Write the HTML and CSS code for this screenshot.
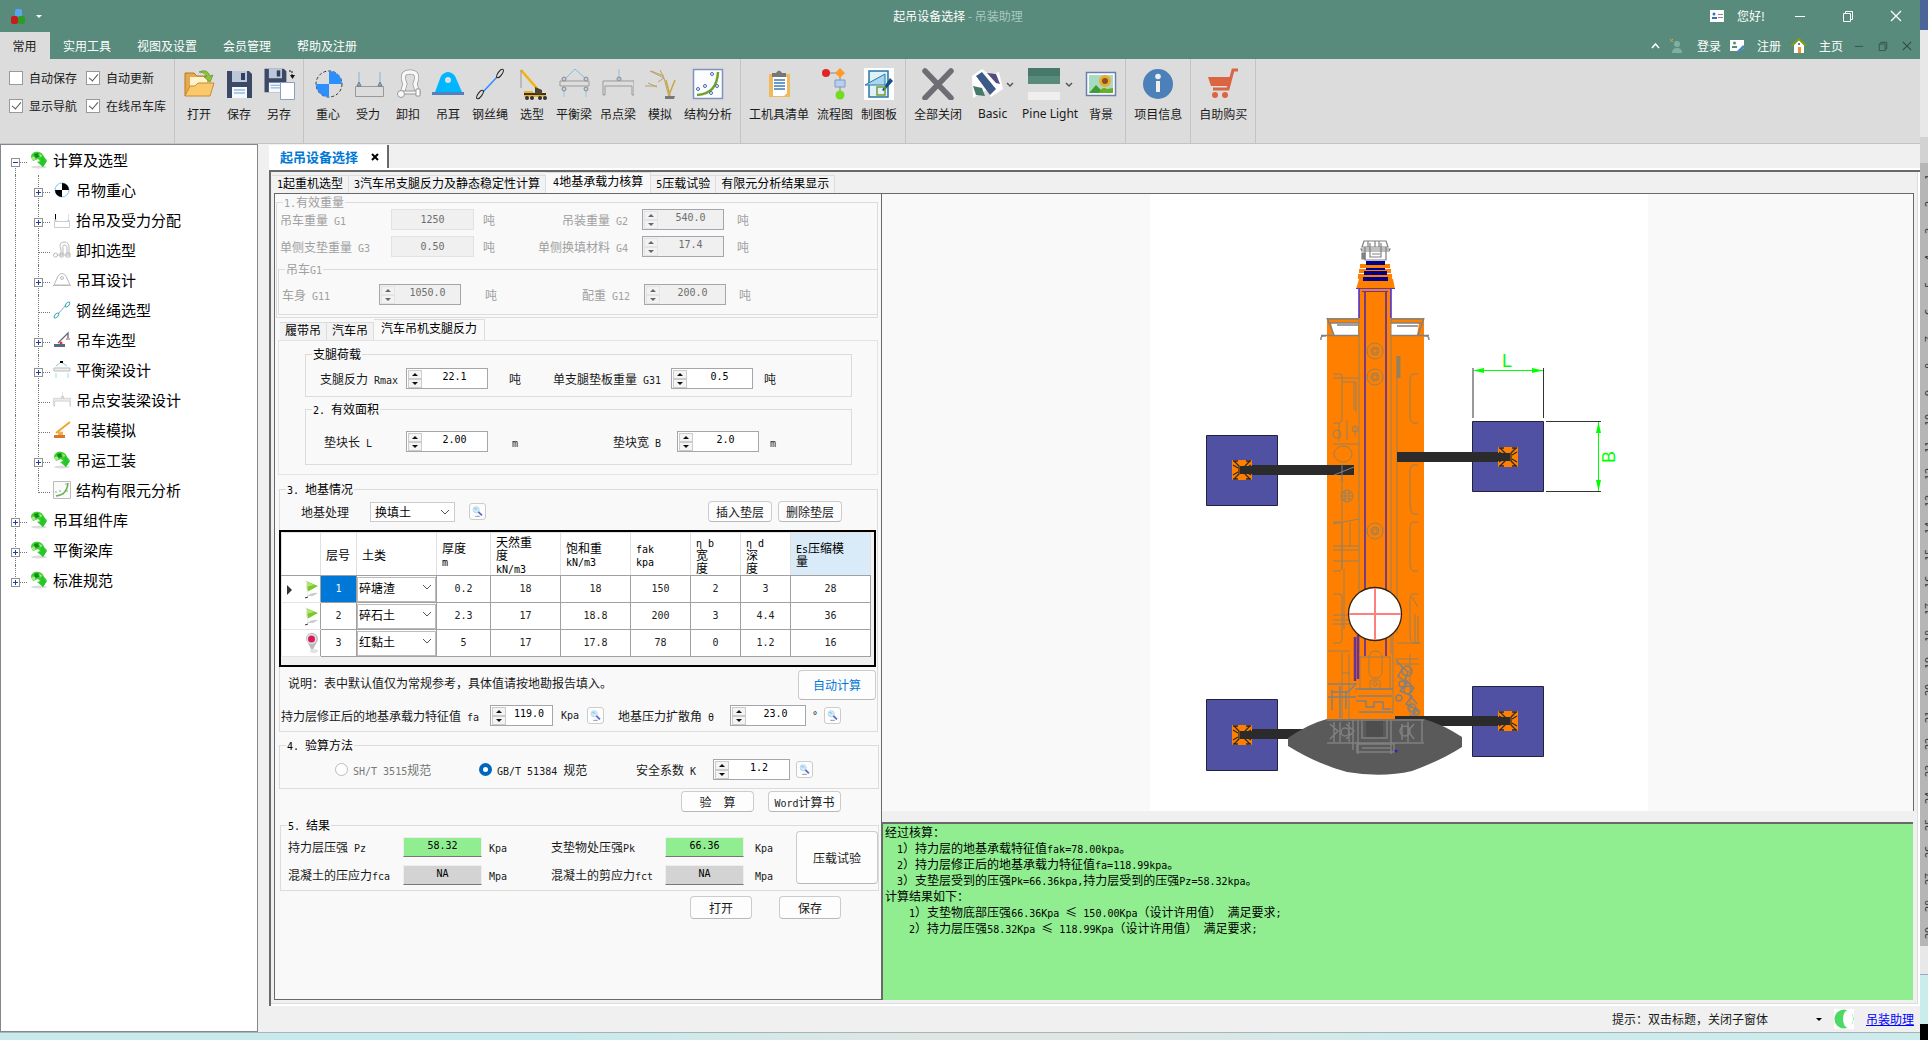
FILE: index.html
```html
<!DOCTYPE html>
<html lang="zh-CN">
<head>
<meta charset="utf-8">
<title>起吊设备选择 - 吊装助理</title>
<link rel="stylesheet" href="styles.css">
</head>
<body>
<svg class="defs" aria-hidden="true">
  <symbol id="tree-leaf" viewBox="0 0 18 18"><ellipse cx="9" cy="16" rx="8" ry="1.500" fill="#ddd"/><path d="M1 6C1 2 5 0 9 1q4 1 5 5l3 3-4 7-6-5 3-1-2-2-5 2z" fill="#3fd02f"/><path d="M4 3l4-1 1 4-4 1z" fill="#0f8a1c"/><path d="M10 4l4 2 1 4h2l-4 6-4-5h2z" fill="#25c52c"/><circle cx="3.500" cy="7.500" r="2" fill="#a5e884"/><path d="M9 3l3 1-1 3z" fill="#a9ec7b"/></symbol>
  <symbol id="find" viewBox="0 0 17 17"><circle cx="7" cy="6.500" r="3.500" fill="#cfeafa" stroke="#b7d5ea"/><path d="M9.500 9l4 4" stroke="#5a69cf" stroke-width="2"/><path d="M6 14h5" stroke="#888"/><path d="M5 5l3 1" stroke="#6ab8ec"/></symbol>
  <symbol id="flag" viewBox="0 0 16 22"><path d="M3 3l12 5-11 6z" fill="#7cc82a"/><path d="M3 3l8 4-8 2z" fill="#b2e36c"/><path d="M3 2l2 17" stroke="#eee"/><path d="M4 18q5-4 11-3l-5 3z" fill="#ccc"/><path d="M2 20l3-1" stroke="#333"/></symbol>
  <symbol id="pin" viewBox="0 0 16 22"><path d="M3 8a6 6 0 1 1 11 2l-5 9-4-8z" fill="#bbb"/><circle cx="8.500" cy="7" r="5" fill="#e4e4e4"/><circle cx="8.500" cy="7" r="3.500" fill="#d81b60"/><ellipse cx="11" cy="19" rx="4" ry="2" fill="#e3e3e3"/></symbol>
  <symbol id="disk" viewBox="0 0 32 32"><path d="M4 3h22l3 3v24H4z" fill="#3c4966"/><path d="M9 3h15v11H9z" fill="#bcc7d8"/><path d="M18 5h4v7h-4z" fill="#33405c"/><path d="M9 19h15v11H9z" fill="#f5f8fc"/><path d="M11 22h11M11 25h11" stroke="#6a9bd0"/></symbol>
  <symbol id="chart" viewBox="0 0 32 32"><path d="M1.500 1.500h29v29h-29z" fill="#fcfdff" stroke="#8292be" stroke-width="1.500"/><path d="M5 27Q25 26 26 4" fill="none" stroke="#6ea32d" stroke-width="2.500"/><g fill="#fff" stroke="#4265ad"><circle cx="6" cy="21" r="1.500"/><circle cx="13" cy="18" r="1.500"/><circle cx="20" cy="6" r="1.500"/><circle cx="25" cy="18" r="1.500"/><circle cx="19" cy="25" r="1.500"/></g></symbol>
  <symbol id="frame-load" viewBox="0 0 32 32"><path d="M3.500 18.500h28v10h-28z" fill="none" stroke="#999"/><path d="M7 4v10M28 4v10" stroke="#7db7e8"/><path d="M5 18l2-4 2 4zM26 18l2-4 2 4z" fill="#9ab6d0" stroke="#777"/></symbol>
  <symbol id="beam" viewBox="0 0 32 32"><path d="M7 11L17 1l11 10" fill="none" stroke="#78c0e0"/><path d="M2 13h29v5H2z" fill="#ddd" stroke="#999"/><path d="M6 23v6M28 23v6" stroke="#83cfe0"/><g fill="#ccd" stroke="#888"><circle cx="6" cy="11" r="2"/><circle cx="28" cy="11" r="2"/><circle cx="6" cy="21" r="2"/><circle cx="28" cy="21" r="2"/></g></symbol>
  <symbol id="point-beam" viewBox="0 0 32 32"><path d="M17 1v10" stroke="#8bc4de"/><circle cx="17" cy="11" r="2" fill="#b9c9d9" stroke="#888"/><path d="M1 27V13h31v14h-2V18H3v9z" fill="#ddd" stroke="#999"/></symbol>
  <symbol id="rope" viewBox="0 0 32 32"><path d="M9 24L23 9" stroke="currentColor" stroke-width="1.500"/><ellipse cx="6" cy="26.500" rx="2" ry="5" transform="rotate(35 6 26.500)" fill="none" stroke="#222"/><ellipse cx="26" cy="5.500" rx="2" ry="5" transform="rotate(35 26 5.500)" fill="none" stroke="#222"/></symbol>
  <symbol id="win-min" viewBox="0 0 12 12"><path d="M1 6.500h10" stroke="currentColor"/></symbol>
  <symbol id="win-restore" viewBox="0 0 12 12"><path d="M1.500 3.500h7v8h-7zM3.500 3V1.500h7v8H9" fill="none" stroke="currentColor"/></symbol>
  <symbol id="win-close" viewBox="0 0 12 12"><path d="M1 1l10 10M11 1L1 11" stroke="currentColor" stroke-width="1.300"/></symbol>
  <symbol id="down" viewBox="0 0 8 8"><path d="M1 2l3 3 3-3" fill="none" stroke="#555" stroke-width="1.500"/></symbol>
  <symbol id="foot" viewBox="0 0 20 20"><rect width="20" height="20" rx="1" fill="#ff8000"/><path d="M2 1l5 5v8l-5 5M18 1l-5 5v8l5 5M1 1h5M14 1h5M1 19h5M14 19h5M1 5l5 3M1 15l5-3M19 5l-5 3M19 15l-5-3" fill="none" stroke="#2b2b2b" stroke-width="1.300"/></symbol>
</svg>

<div class="desktop">
<div class="window">
  <header class="titlebar">
    <div class="quick">
      <svg width="17" height="17" viewBox="0 0 17 17"><rect x="5" y="1" width="7" height="8" rx="2" fill="#58a8ee"/><rect x="1" y="8" width="7" height="8" rx="2" fill="#c41d1d"/><rect x="8" y="8" width="7" height="8" rx="2" fill="#2d9c25"/></svg>
      <span class="caret white"></span>
    </div>
    <h1>起吊设备选择 <span>- 吊装助理</span></h1>
    <div class="win-controls">
      <svg class="card" width="14" height="12" viewBox="0 0 14 12"><path d="M0 0h14v12H0z" fill="#fff"/><circle cx="4" cy="4" r="1.500" fill="#3a6fb8"/><path d="M2 9V7h5v2z" fill="#3a6fb8"/><path d="M8 4h5v1H8zM8 7h5v1H8z" fill="#888"/></svg>
      <span class="hello">您好!</span>
      <button aria-label="最小化"><svg><use href="#win-min"/></svg></button>
      <button aria-label="还原"><svg><use href="#win-restore"/></svg></button>
      <button aria-label="关闭"><svg><use href="#win-close"/></svg></button>
    </div>
  </header>
  <nav class="menubar">
    <button class="menu active">常用</button><button class="menu">实用工具</button><button class="menu">视图及设置</button><button class="menu">会员管理</button><button class="menu">帮助及注册</button>
    <div class="account">
      <svg width="9" height="6" viewBox="0 0 9 6"><path d="M1 5l3.500-4L8 5" fill="none" stroke="#fff" stroke-width="1.500"/></svg>
      <svg class="ic-user" width="14" height="16" viewBox="0 0 14 16"><path d="M1 1l3 3M4 1L1 4" stroke="#d2a23c"/><circle cx="8" cy="6" r="3" fill="#7fb1a2"/><path d="M3 15q0-5 5-5t5 5z" fill="#7fb1a2"/></svg>
      <a href="#">登录</a>
      <svg class="ic-reg" width="16" height="14" viewBox="0 0 16 14"><path d="M0 1h14v8l-4 3H0z" fill="#fff"/><circle cx="4.500" cy="4" r="1.500" fill="#588b7b"/><path d="M2 9V7h5v2z" fill="#588b7b"/><path d="M8 13l6-6" stroke="#4a86c8" stroke-width="2.500"/></svg>
      <a href="#">注册</a>
      <svg class="ic-home" width="16" height="16" viewBox="0 0 16 16"><path d="M3 7l5-5 5 5v8H3z" fill="#fff"/><path d="M0 8l8-7 7 7" fill="none" stroke="#7da018" stroke-width="2"/><path d="M7 9h3v6H7z" fill="#f0902c"/><path d="M7 5h2v2H7z" fill="#4a7dd0"/></svg>
      <a href="#">主页</a>
      <button aria-label="子窗口最小化"><svg><use href="#win-min"/></svg></button>
      <button aria-label="子窗口还原"><svg><use href="#win-restore"/></svg></button>
      <button aria-label="子窗口关闭"><svg><use href="#win-close"/></svg></button>
    </div>
  </nav>

  <div class="ribbon">
    <div class="group checks">
      <label><input type="checkbox">自动保存</label><label><input type="checkbox" checked>自动更新</label>
      <label><input type="checkbox" checked>显示导航</label><label><input type="checkbox" checked>在线吊车库</label>
    </div>
    <div class="group">
      <button class="tool"><svg viewBox="0 0 32 32"><path d="M2 28V5h9l3 3h13v5" fill="#e6a94d" stroke="#b97a24"/><path d="M7 9h17v9H7z" fill="#fff3cf"/><path d="M2 28l5-10h5l3-3h16l-4 13z" fill="#fac96c" stroke="#c98b30"/><path d="M16 4q8-4 11 4l3-1-3 7-6-5 3-1q-3-4-8-4z" fill="#8fc33c" stroke="#5f8f25" stroke-width=".7"/></svg>打开</button>
      <button class="tool"><svg><use href="#disk"/></svg>保存</button>
      <button class="tool"><svg viewBox="0 0 32 32"><svg x="-2" y="-2" width="28" height="28" viewBox="0 0 32 32"><use href="#disk" width="32" height="32"/></svg><path d="M17.500 14.500h14v17h-14z" fill="#fff" stroke="#88a0c4"/><path d="M26 3h3v6" fill="none" stroke="#111" stroke-dasharray="2 1"/><path d="M27 7h5l-2.500 4z" fill="#111"/></svg>另存</button>
    </div>
    <div class="group">
      <button class="tool"><svg viewBox="0 0 32 32"><circle cx="17" cy="16" r="13" fill="#dcdcdc" stroke="#333" stroke-dasharray="3 2"/><path d="M17 3a13 13 0 0 1 13 13H17zM17 29A13 13 0 0 1 4 16h13z" fill="#2d8fff"/></svg>重心</button>
      <button class="tool"><svg><use href="#frame-load"/></svg>受力</button>
      <button class="tool"><svg viewBox="0 0 32 32"><path d="M10 26l3-10q-5-12 5-12t5 12l3 10" fill="none" stroke="#999" stroke-width="5"/><path d="M10 26l3-10q-5-12 5-12t5 12l3 10" fill="none" stroke="#f8f8f8" stroke-width="3.500"/><path d="M10 23h18v3H10z" fill="#f4f4f4" stroke="#999"/><circle cx="9" cy="26" r="3.500" fill="#f8f8f8" stroke="#999"/><path d="M24 21h4v7h-4z" fill="#fff" stroke="#999"/></svg>卸扣</button>
      <button class="tool"><svg viewBox="0 0 32 32"><path d="M3 24L9 8q7-8 14 0l7 16z" fill="#00b7ff"/><path d="M0 24h32v3H0z" fill="#5382bd"/><circle cx="16" cy="12" r="3" fill="#ddd"/></svg>吊耳</button>
      <button class="tool blue"><svg><use href="#rope"/></svg>钢丝绳</button>
      <button class="tool"><svg viewBox="0 0 32 32"><path d="M5 2l19 22" stroke="#f5b10c" stroke-width="2.500"/><path d="M5 2v18" stroke="#999"/><path d="M8 23h8l3 3h11v3H8z" fill="#eeb222"/><path d="M8 26h22" stroke="#333" stroke-width="2"/><g fill="#333"><circle cx="11" cy="30" r="2"/><circle cx="16" cy="30" r="2"/><circle cx="24" cy="30" r="2"/><circle cx="29" cy="30" r="2"/></g><path d="M19 19l7 3v4h-7z" fill="#4d4330"/></svg>选型</button>
      <button class="tool"><svg><use href="#beam"/></svg>平衡梁</button>
      <button class="tool"><svg><use href="#point-beam"/></svg>吊点梁</button>
      <button class="tool"><svg viewBox="0 0 32 32"><path d="M6 3l14 7 5 19M7 3l13 5M16 2l4 8-6 4M1 18h12M4 15l9 4" fill="none" stroke="#b8a26a"/><path d="M25 27l6-15M22 12l4 16" stroke="#c9a648" stroke-width="1.500"/><path d="M21 28h10l-1 3h-9z" fill="#777"/></svg>模拟</button>
      <button class="tool"><svg><use href="#chart"/></svg>结构分析</button>
    </div>
    <div class="group">
      <button class="tool"><svg viewBox="0 0 32 32"><path d="M6 6h21v23H6z" fill="#f0ba5c"/><path d="M10 9h14v16l-3 3H10z" fill="#fff"/><path d="M9 5h4q3-5 6 0h4v4H9z" fill="#777"/><path d="M11 12h11M11 15h11M11 18h11M11 21h11" stroke="#3d7bb8" stroke-width="1.500"/></svg>工机具清单</button>
      <button class="tool"><svg viewBox="0 0 32 32"><path d="M8 5h13v23" fill="none" stroke="#888"/><circle cx="7" cy="5" r="4" fill="#e02525"/><path d="M21 0l5 5-5 5-5-5z" fill="#ff9c25"/><path d="M16 12h10v7H16z" fill="#b8d0ef" stroke="#7f9ac0"/><circle cx="21" cy="27" r="4.500" fill="#74dc1f"/></svg>流程图</button>
      <button class="tool"><svg viewBox="0 0 32 32"><path d="M1 0h30v32H1z" fill="#fff"/><path d="M6 3h19v26H6z" fill="#dff2fa" stroke="#2876a5" stroke-width="1.500"/><path d="M2 17L22 6v11z" fill="#a9d5ed" stroke="#2876a5"/><path d="M19 22l8-12 3 3-9 10z" fill="#114f86"/><path d="M14 19h8v8h-8z" fill="none" stroke="#7a9a35" stroke-width="1.500"/></svg>制图板</button>
    </div>
    <div class="group">
      <button class="tool"><svg viewBox="0 0 32 32"><path d="M3 3l26 27M29 3L3 30" stroke="#6d6d73" stroke-width="5.500" stroke-linecap="round"/></svg>全部关闭</button>
      <button class="tool split basic"><svg viewBox="0 0 32 32"><path d="M1 8L11 1l8 6 9-3 4 17-12 8-4-7L2 30z" fill="#fff"/><path d="M5 8l6-4 14 17-6 6z" fill="#3c5a88"/><path d="M16 5l9 1 4 10-4-1z" fill="#574a7c"/><path d="M2 18l9 2 3 8-9-1z" fill="#457a69"/></svg>Basic<svg class="drop"><use href="#down"/></svg></button>
      <button class="tool split pine"><svg viewBox="0 0 32 32"><path d="M0 0h32v8H0z" fill="#47796a"/><path d="M0 8h32v8H0z" fill="#588b7b"/><path d="M0 16h32v8H0z" fill="#ddd"/><path d="M0 24h32v8H0z" fill="#efefef"/></svg>Pine Light<svg class="drop"><use href="#down"/></svg></button>
      <button class="tool"><svg viewBox="0 0 32 32"><path d="M1.500 4.500h29v23h-29z" fill="#fff" stroke="#6c7dae" stroke-width="1.500"/><path d="M4 7h24v18H4z" fill="#a8dcc2"/><path d="M4 25l7-8 8 8z" fill="#3f9c34"/><circle cx="20" cy="13" r="6" fill="#efac2c"/><circle cx="20" cy="13" r="3" fill="#84512a"/><path d="M14 25q3-7 8-4l6-1v5z" fill="#66af27"/></svg>背景</button>
    </div>
    <div class="group">
      <button class="tool"><svg viewBox="0 0 32 32"><circle cx="16" cy="16" r="15" fill="#4b80b9"/><circle cx="16" cy="8.500" r="2.800" fill="#eee"/><path d="M14 13h4v11h-4z" fill="#eee"/></svg>项目信息</button>
    </div>
    <div class="group">
      <button class="tool"><svg viewBox="0 0 32 32"><path d="M31 2h-5l-5 19H6" fill="none" stroke="#db6543" stroke-width="3"/><path d="M1 9h24l-3 9H4z" fill="#db6543"/><circle cx="8" cy="27" r="3" fill="#db6543"/><circle cx="18" cy="27" r="3" fill="#db6543"/></svg>自助购买</button>
    </div>
  </div>

  <main class="workspace">
    <aside class="sidebar">
      <ul class="tree">
        <li><div class="row"><span class="gut half"><button class="tog open" aria-label="折叠"></button></span><svg class="ti"><use href="#tree-leaf"/></svg>计算及选型</div>
          <ul>
            <li><div class="row"><span class="gut line"></span><span class="gut"><button class="tog" aria-label="展开"></button></span><svg class="ti" viewBox="0 0 18 18"><circle cx="9" cy="9" r="7" fill="#fff" stroke="#8bc0f0"/><path d="M9 2a7 7 0 0 1 7 7H9zM9 16A7 7 0 0 1 2 9h7z" fill="#000"/></svg>吊物重心</div></li>
            <li><div class="row"><span class="gut line"></span><span class="gut"><button class="tog" aria-label="展开"></button></span><svg class="ti" viewBox="0 0 18 18"><path d="M1.500 10.500h15v6h-15z" fill="none" stroke="#ccc"/><path d="M2.500 3v6" stroke="#000"/><path d="M15.500 3v6" stroke="#ddd"/><path d="M1 10l1.500-2L4 10zM14 10l1.500-2 1.500 2z" fill="#b5cfe6"/></svg>抬吊及受力分配</div></li>
            <li><div class="row"><span class="gut line"></span><span class="gut"></span><svg class="ti" viewBox="0 0 18 18"><g fill="none" stroke="#bbb"><path d="M8 14V9q-3-8 3-8t5 8v5M10 13V8q-1-5 2-4t2 4v5M7 12h3v4H7zM13 12h4v4h-4zM4 14h13"/><circle cx="2.500" cy="14" r="2"/></g></svg>卸扣选型</div></li>
            <li><div class="row"><span class="gut line"></span><span class="gut"><button class="tog" aria-label="展开"></button></span><svg class="ti" viewBox="0 0 18 18"><path d="M1 14L5 5q4-5 8 0l4 9zM0 14.500h18" fill="none" stroke="#bbb"/><circle cx="9" cy="7" r="1.500" fill="none" stroke="#bbb"/></svg>吊耳设计</div></li>
            <li><div class="row"><span class="gut line"></span><span class="gut"></span><svg class="ti" viewBox="0 0 18 18"><path d="M5 13l8-9" stroke="#8aa0e8"/><g fill="none" stroke="#3aa9b2"><ellipse cx="3.500" cy="14.500" rx="1.500" ry="3" transform="rotate(40 3.500 14.500)"/><ellipse cx="14.500" cy="3.500" rx="1.500" ry="3" transform="rotate(40 14.500 3.500)"/></g></svg>钢丝绳选型</div></li>
            <li><div class="row"><span class="gut line"></span><span class="gut"><button class="tog" aria-label="展开"></button></span><svg class="ti" viewBox="0 0 18 18"><path d="M5 12L15 2v5" fill="none" stroke="#667" stroke-width="1.300"/><path d="M1 13h11v3H1z" fill="#556a88"/><circle cx="8" cy="12" r="1.500" fill="#d33"/><path d="M13 7h4v2h-4z" fill="#e0a0a0"/></svg>吊车选型</div></li>
            <li><div class="row"><span class="gut line"></span><span class="gut"><button class="tog" aria-label="展开"></button></span><svg class="ti" viewBox="0 0 18 18"><path d="M3 5l5-4 6 4" fill="none" stroke="#8cc"/><path d="M7 0h3v2H7z" fill="#000"/><path d="M1 7h16v3H1z" fill="#eee" stroke="#bbb"/><path d="M3 12v5M15 12v5" stroke="#9de"/></svg>平衡梁设计</div></li>
            <li><div class="row"><span class="gut line"></span><span class="gut"></span><svg class="ti pale"><use href="#point-beam"/></svg>吊点安装梁设计</div></li>
            <li><div class="row"><span class="gut line"></span><span class="gut"></span><svg class="ti" viewBox="0 0 18 18"><path d="M3 12L17 1" stroke="#f1a52b" stroke-width="2"/><path d="M1 14h11v3H1z" fill="#d9772a"/><path d="M5 10l5 1v3H5z" fill="#efb050"/></svg>吊装模拟</div></li>
            <li><div class="row"><span class="gut line"></span><span class="gut"><button class="tog" aria-label="展开"></button></span><svg class="ti"><use href="#tree-leaf"/></svg>吊运工装</div></li>
            <li><div class="row"><span class="gut line"></span><span class="gut end"></span><svg class="ti" viewBox="0 0 18 18"><path d="M.5.500h17v17H.5z" fill="#fafafa" stroke="#bbb"/><path d="M3 15Q14 14 15 2" fill="none" stroke="#6ab04c" stroke-width="1.500"/><path d="M2 11h2M6 10h2M12 3h2M13 10h2M9 13h2" stroke="#8aa"/></svg>结构有限元分析</div></li>
          </ul>
        </li>
        <li><div class="row"><span class="gut"><button class="tog" aria-label="展开"></button></span><svg class="ti"><use href="#tree-leaf"/></svg>吊耳组件库</div></li>
        <li><div class="row"><span class="gut"><button class="tog" aria-label="展开"></button></span><svg class="ti"><use href="#tree-leaf"/></svg>平衡梁库</div></li>
        <li><div class="row"><span class="gut end"><button class="tog" aria-label="展开"></button></span><svg class="ti"><use href="#tree-leaf"/></svg>标准规范</div></li>
      </ul>
    </aside>

    <section class="document">
      <div class="doc-tabs"><div class="doc-tab">起吊设备选择<button aria-label="关闭页签"><svg viewBox="0 0 8 8"><path d="M1 1l6 6M7 1L1 7" stroke="#000" stroke-width="2"/></svg></button></div></div>
      <div class="frame">
        <div class="tabs"><button><i>1</i>起重机选型</button><button><i>3</i>汽车吊支腿反力及静态稳定性计算</button><button class="sel"><i>4</i>地基承载力核算</button><button><i>5</i>压载试验</button><button>有限元分析结果显示</button></div>
        <div class="panes">
          <form class="form">
            <fieldset class="g1" disabled>
              <legend><i>1.</i>有效重量</legend>
              <div class="fields c-weight">
                <label for="g1">吊车重量<i> G1</i></label><input class="flat" id="g1" value="1250"><span class="unit">吨</span>
                <label for="g2">吊装重量<i> G2</i></label><span class="spin"><span><button type="button" aria-label="增加"></button><button type="button" aria-label="减少"></button></span><input id="g2" value="540.0"></span><span class="unit">吨</span>
                <label for="g3">单侧支垫重量<i> G3</i></label><input class="flat" id="g3" value="0.50"><span class="unit">吨</span>
                <label for="g4">单侧换填材料<i> G4</i></label><span class="spin"><span><button type="button" aria-label="增加"></button><button type="button" aria-label="减少"></button></span><input id="g4" value="17.4"></span><span class="unit">吨</span>
              </div>
              <fieldset class="crane">
                <legend>吊车<i>G1</i></legend>
                <div class="fields c-crane">
                  <label for="g11">车身<i> G11</i></label><span class="spin"><span><button type="button" aria-label="增加"></button><button type="button" aria-label="减少"></button></span><input id="g11" value="1050.0"></span><span class="unit">吨</span>
                  <label for="g12">配重<i> G12</i></label><span class="spin"><span><button type="button" aria-label="增加"></button><button type="button" aria-label="减少"></button></span><input id="g12" value="200.0"></span><span class="unit">吨</span>
                </div>
              </fieldset>
            </fieldset>

            <div class="tabs inner"><button type="button">履带吊</button><button type="button">汽车吊</button><button type="button" class="sel">汽车吊机支腿反力</button></div>
            <div class="tab-page">
              <fieldset class="leg">
                <legend>支腿荷载</legend>
                <div class="fields c-leg">
                  <label for="rmax">支腿反力<i> Rmax</i></label><span class="spin"><span><button type="button" aria-label="增加"></button><button type="button" aria-label="减少"></button></span><input id="rmax" value="22.1"></span><span class="unit">吨</span>
                  <label for="g31">单支腿垫板重量<i> G31</i></label><span class="spin"><span><button type="button" aria-label="增加"></button><button type="button" aria-label="减少"></button></span><input id="g31" value="0.5"></span><span class="unit">吨</span>
                </div>
              </fieldset>
              <fieldset class="area">
                <legend><i>2. </i>有效面积</legend>
                <div class="fields c-area">
                  <label for="len">垫块长<i> L</i></label><span class="spin"><span><button type="button" aria-label="增加"></button><button type="button" aria-label="减少"></button></span><input id="len" value="2.00"></span><span class="unit"><i>m</i></span>
                  <label for="wid">垫块宽<i> B</i></label><span class="spin"><span><button type="button" aria-label="增加"></button><button type="button" aria-label="减少"></button></span><input id="wid" value="2.0"></span><span class="unit"><i>m</i></span>
                </div>
              </fieldset>
            </div>

            <fieldset class="soil">
              <legend><i>3. </i>地基情况</legend>
              <div class="soil-bar"><label for="treat">地基处理</label><select id="treat"><option>换填土</option></select><button type="button" class="find" aria-label="查看地基处理"><svg><use href="#find"/></svg></button><span class="push"></span><button type="button" class="btn">插入垫层</button><button type="button" class="btn">删除垫层</button></div>
              <div class="table-box">
                <table>
                  <colgroup><col class="w39"><col class="w36"><col class="w80"><col class="w54"><col class="w70"><col class="w70"><col class="w60"><col class="w50"><col class="w50"><col class="w80"></colgroup>
                  <thead><tr><th></th><th>层号</th><th>土类</th><th>厚度<br><i>m</i></th><th>天然重<br>度<br><i>kN/m3</i></th><th>饱和重<br><i>kN/m3</i></th><th><i>fak</i><br><i>kpa</i></th><th><i>η b</i><br>宽<br>度</th><th><i>η d</i><br>深<br>度</th><th class="hot"><i>Es</i>压缩模<br>量</th></tr></thead>
                  <tbody>
                    <tr><td class="mark cur"><svg><use href="#flag"/></svg></td><td class="picked">1</td><td class="cell-select"><select aria-label="土类1"><option>碎塘渣</option></select></td><td>0.2</td><td>18</td><td>18</td><td>150</td><td>2</td><td>3</td><td>28</td></tr>
                    <tr><td class="mark"><svg><use href="#flag"/></svg></td><td>2</td><td class="cell-select"><select aria-label="土类2"><option>碎石土</option></select></td><td>2.3</td><td>17</td><td>18.8</td><td>200</td><td>3</td><td>4.4</td><td>36</td></tr>
                    <tr><td class="mark"><svg><use href="#pin"/></svg></td><td>3</td><td class="cell-select"><select aria-label="土类3"><option>红黏土</option></select></td><td>5</td><td>17</td><td>17.8</td><td>78</td><td>0</td><td>1.2</td><td>16</td></tr>
                  </tbody>
                </table>
              </div>
              <div class="note"><span>说明：表中默认值仅为常规参考，具体值请按地勘报告填入。</span><button type="button" class="btn accent">自动计算</button></div>
              <div class="fields c-fa">
                <label for="fa">持力层修正后的地基承载力特征值<i> fa</i></label><span class="spin"><span><button type="button" aria-label="增加"></button><button type="button" aria-label="减少"></button></span><input id="fa" value="119.0"></span><span class="unit"><i>Kpa</i></span><button type="button" class="find" aria-label="查看特征值"><svg><use href="#find"/></svg></button>
                <label for="theta">地基压力扩散角<i> θ</i></label><span class="spin"><span><button type="button" aria-label="增加"></button><button type="button" aria-label="减少"></button></span><input id="theta" value="23.0"></span><span class="unit"><i>°</i></span><button type="button" class="find" aria-label="查看扩散角"><svg><use href="#find"/></svg></button>
              </div>
            </fieldset>

            <fieldset class="method">
              <legend><i>4. </i>验算方法</legend>
              <div class="fields c-method">
                <label class="dim"><input type="radio" name="std"><span><i>SH/T 3515</i>规范</span></label>
                <label><input type="radio" name="std" checked><span><i>GB/T 51384 </i>规范</span></label>
                <label for="k"><span>安全系数<i> K</i></span></label><span class="spin"><span><button type="button" aria-label="增加"></button><button type="button" aria-label="减少"></button></span><input id="k" value="1.2"></span><button type="button" class="find" aria-label="查看安全系数"><svg><use href="#find"/></svg></button>
              </div>
            </fieldset>
            <div class="actions check"><button type="button" class="btn">验　算</button><button type="button" class="btn"><i>Word</i>计算书</button></div>

            <fieldset class="result">
              <legend><i>5. </i>结果</legend>
              <div class="result-body">
                <div class="fields c-result">
                  <label for="pz">持力层压强<i> Pz</i></label><input class="out ok" id="pz" value="58.32" readonly><span class="unit"><i>Kpa</i></span>
                  <label for="pk">支垫物处压强<i>Pk</i></label><input class="out ok" id="pk" value="66.36" readonly><span class="unit"><i>Kpa</i></span>
                  <label for="fca">混凝土的压应力<i>fca</i></label><input class="out" id="fca" value="NA" readonly><span class="unit"><i>Mpa</i></span>
                  <label for="fct">混凝土的剪应力<i>fct</i></label><input class="out" id="fct" value="NA" readonly><span class="unit"><i>Mpa</i></span>
                </div>
                <button type="button" class="btn big">压载试验</button>
              </div>
            </fieldset>
            <div class="actions files"><button type="button" class="btn">打开</button><button type="button" class="btn">保存</button></div>
          </form>

          <div class="view">
            <div class="picture">
              <svg class="cad" viewBox="0 0 498 617">
                <rect width="498" height="617" fill="#fff"/>
                <g fill="#5151a3" stroke="#22223c"><path d="M56.500 241.500h71v70h-71zM322.500 227.500h71v70h-71zM56.500 505.500h71v71h-71zM322.500 492.500h71v70h-71z"/></g>
                <path d="M177 126q0-2 3-2h90q4 0 4 3v399H177z" fill="#ff8000"/>
                <path d="M181 129h27v12h-24zM241 129h28l-2 12h-26z" fill="#fff"/>
                <path d="M177 125h97M180 129h91M187 131h21M247 132h21M171 141.500h108" fill="none" stroke="#808080" stroke-width="1.500"/>
                <path d="M177 124l7 17M274 124l-6 17M171 146q-1-5 5-4M279 146q0-5-5-4" fill="none" stroke="#808080" stroke-width="1.500"/>
                <path d="M209 95h32v430h-32z" fill="#ff8000"/>
                <path d="M209 95v29M241 95v29" stroke="#3b2ce0" stroke-width="1.500"/>
                <path d="M209 125v335M241 125v335M247 200v240M243 440v80" stroke="#96805e"/>
                <path d="M215 97v365M236 97v365" stroke="#7a3c80" stroke-width="2"/>
                <path d="M206 95l3-10h34l2 10zM208 85v-5h34v5zM209 79v-4h32v4zM210 74v-4h30v4z" fill="#ff8000"/>
                <path d="M216 67h19v4h-19zM216 74h19v2h-19zM214 77h23v4h-23zM213 83h25v4h-25z" fill="#00008b"/>
                <path d="M206 94.500h39M212 97.500h26" stroke="#5a35c0"/>
                <g fill="none" stroke="#808080" stroke-width="1.200"><path d="M214 47h22l2 6h-26zM215 53v13h21V53M211 55h29l-1 2h-27zM220 49v14h11V49M222 57h8M222 60h8M225 47v6M229 47v6M218 47v6"/><path d="M212 59h3v6h-3z" fill="#808080"/></g>
                <g fill="none" stroke="#96805e"><circle cx="225" cy="157" r="8"/><circle cx="225" cy="157" r="4"/><circle cx="225" cy="183" r="8"/><circle cx="225" cy="183" r="4"/><circle cx="225" cy="337" r="8"/><circle cx="225" cy="337" r="4"/><path d="M223 155h4v4h-4zM223 181h4v4h-4zM223 335h4v4h-4z"/>
                  <path d="M183 180h7q2 0 2 3v42q0 4-3 4h-6M268 180h-5q-3 0-3 8v32q0 8 3 9h5M268 271h-5q-3 0-3 8v30q0 8 3 11h5M268 328h-5q-3 0-3 8v32q0 8 3 9h5M268 400h-5q-3 0-3 8v32q0 8 3 9h5M183 328h7q2 0 2 3v42q0 4-3 4h-6M183 400h7q2 0 2 3v42q0 4-3 4h-6"/>
                  <path d="M183 184h26M192 188h14v30M204 188v28M189 229v18M197 226v20M205 232v10M183 250h26M192 280v95M194 375v60M200 328v24M183 352h26M183 356h26M183 367h26M183 421h22M183 426h22M183 430h22M183 330l26-5M178 457h22M192 458v67M199 460v65M192 479h8"/>
                  <ellipse cx="193" cy="260" rx="9" ry="8"/><circle cx="187" cy="240" r="4"/><circle cx="205" cy="235" r="3"/><circle cx="197" cy="302" r="6"/><path d="M192 299h10M192 302h10M192 305h10M195 296v12M199 296v12"/>
                  <path d="M247 162v40"/><path d="M248.500 162v22" stroke-width="4"/><path d="M262 403l6 10M265 420v30M268 422v28M247 449h24M245 465h24M245 470h24M260 460v65"/>
                  <rect x="219" y="457" width="13" height="27" rx="6"/><rect x="210" y="463" width="30" height="32"/><rect x="220" y="486" width="10" height="9" rx="2"/><circle cx="225" cy="490" r="2"/></g>
                <path d="M205 443v44M208 441v44" stroke="#6b318f" stroke-width="2.500"/>
                <g fill="none" stroke="#808080" stroke-width="1.500"><path d="M178 490h28l-8 8h-17M182 496v20M190 492v32M196 497v18M178 503h28M205 495h38M208 502h34M206 507h10v6h8v-5h9v7h8M209 518h34M246 466l7 8-5 8 9 7-7 8 12 5-6 8 12 6-7 6M250 471l8 7-3 7 9 9-5 6 8 10"/><circle cx="257" cy="477" r="5"/><circle cx="262" cy="514" r="4"/><circle cx="249" cy="504" r="3"/><circle cx="252" cy="490" r="3"/><circle cx="258" cy="496" r="4"/><circle cx="266" cy="518" r="3"/></g>
                <g fill="#2b2b2b"><path d="M88 271h116v10H88zM247 258h115v10H247zM88 535h75v10H88zM245 522h117v10H245z"/></g>
                <path d="M184 281l20-8M192 270v18" stroke="#808080"/>
                <use href="#foot" x="82" y="266" width="20" height="20"/><use href="#foot" x="348" y="253" width="20" height="20"/><use href="#foot" x="82" y="531" width="20" height="20"/><use href="#foot" x="348" y="517" width="20" height="20"/>
                <g fill="#2b2b2b"><path d="M90 272h12v8H90zM348 259h12v8h-12zM90 537h12v8H90zM348 523h12v8h-12z"/></g>
                <path d="M138 544q20-14 39-19h97q20 6 38 18v10q-20 13-50 24-30 7-65 1-30-8-59-26z" fill="#5a5a5a"/>
                <g fill="none" stroke="#808080" stroke-width="1.500"><path d="M177 526h97M177 549h97M180 530l8 7-8 8M190 528v20M196 530l8 7-8 8M203 526v30M212 526v18h25v-18M207 550h37v8h-37zM212 554h28M241 526v34M208 526v34M252 530v16M258 528v20M264 530l-6 7 6 8M272 526v22M184 528v20M199 528v20"/><circle cx="255" cy="537" r="5"/><circle cx="195" cy="538" r="4"/></g>
                <path d="M216 527h17v16h-17z" fill="#4e4e4e"/><circle cx="246" cy="557" r="1.500" fill="#3020c0"/>
                <circle cx="225" cy="420" r="26.500" fill="#fff" stroke="#33200d" stroke-width="1.300"/>
                <path d="M199 420h52M225 394v52" stroke="#ff7f7f" stroke-width="2"/>
                <path d="M323 174v50M393.500 174v50M396 227.500h55M396 297.500h55" stroke="#333"/>
                <path d="M324 176.500h69M448.500 228v69" stroke="#0f0"/>
                <path d="M323 176.500l11-2.500v5zM393 176.500l-11-2.500v5zM448.500 228l-2.500 11h5zM448.500 297l-2.500-11h5z" fill="#0f0"/>
                <text class="dim-text" x="352" y="173">L</text><text class="dim-text" transform="translate(465 269) rotate(-90)">B</text>
              </svg>
            </div>
            <div class="log">经过核算：
<i>  1</i>）持力层的地基承载特征值<i>fak=78.00kpa</i>。
<i>  2</i>）持力层修正后的地基承载力特征值<i>fa=118.99kpa</i>。
<i>  3</i>）支垫层受到的压强<i>Pk=66.36kpa,</i>持力层受到的压强<i>Pz=58.32kpa</i>。
计算结果如下：
<i>    1</i>）支垫物底部压强<i>66.36Kpa </i>≤<i> 150.00Kpa</i>（设计许用值）<i> </i>满足要求<i>;</i>
<i>    2</i>）持力层压强<i>58.32Kpa </i>≤<i> 118.99Kpa</i>（设计许用值）<i> </i>满足要求<i>;</i></div>
          </div>
        </div>
      </div>
      <footer class="status"><span>提示：双击标题，关闭子窗体</span><span class="caret"></span>
        <svg width="20" height="20" viewBox="0 0 20 20"><path d="M0 0h20v20H0z" fill="#fff"/><ellipse cx="10" cy="10" rx="9.500" ry="9.500" fill="#4cd964"/><ellipse cx="14" cy="10" rx="5" ry="9" fill="#fff"/></svg>
        <a href="#">吊装助理</a></footer>
    </section>
  </main>
</div>
<div class="taskbar"></div>
</div>
<div class="behind">
  <div class="b-title"></div><div class="b-tools"></div><div class="b-corner"></div>
  <div class="ruler"><span>1</span><span>2</span><span>3</span><span>4</span><span>5</span><span>6</span><span>7</span><span>8</span><span>9</span><span>10</span><span>11</span><span>12</span><span>13</span><span>14</span><span>15</span><span>16</span><span>17</span><span>18</span><span>19</span><span>20</span><span>21</span><span>22</span><span>23</span><span>24</span><span>25</span><span>26</span><span>27</span><span>28</span><span>29</span></div>
  <div class="b-foot"></div><div class="b-desk"></div><div class="b-black"></div>
</div>
</body>
</html>
```
FILE: styles.css
```css
* { box-sizing: border-box; }
body {
  margin: 0;
  display: flex;
  height: 100vh;
  overflow: hidden;
  font: 12px/16px "Noto Sans CJK SC", sans-serif;
  color: #1a1a1a;
  background: #f0f0f0;
}
button, input, select { font: inherit; color: inherit; margin: 0; padding: 0; border: 0; background: none; }
i, .spin input, .flat, .out, td { font-family: "DejaVu Sans Mono", "Noto Sans CJK SC", monospace; font-size: 10px; font-style: normal; }
/* Latin runs share the line of the Chinese text without making it taller */
i { line-height: 0; white-space: pre; }
svg { display: block; flex: none; }
.defs { position: absolute; width: 0; height: 0; }
.desktop { flex: 1; min-width: 0; display: flex; flex-direction: column; }
.window { flex: 1; min-height: 0; display: flex; flex-direction: column; border-bottom: 1px solid #a7b4b4; }
.taskbar { height: 7px; background: linear-gradient(90deg, #c9eaec 0 30%, #dfe6e4 48% 58%, #cdeaec 75%); }

/* title and menu */
.titlebar { height: 32px; background: #588b7b; color: #fff; display: grid; grid-template-columns: 1fr auto 1fr; align-items: center; }
.quick { display: flex; align-items: center; gap: 9px; padding-left: 10px; }
.caret { width: 0; height: 0; border: 3px solid transparent; border-top-color: #000; border-bottom: 0; }
.caret.white { border-top-color: #fff; }
.titlebar h1 { margin: 0; padding-right: 4px; font-size: 12px; font-weight: 400; }
.titlebar h1 span { color: #a9c9be; }
.win-controls { display: flex; justify-content: flex-end; align-items: center; padding-right: 18px; }
.hello { margin: 0 29px 0 13px; }
.win-controls button { width: 12px; height: 12px; margin-right: 36px; }
.win-controls button:last-child { margin-right: 0; }
.win-controls button svg, .account button svg { width: 100%; height: 100%; }
.menubar { height: 27px; background: #588b7b; color: #fff; display: flex; align-items: stretch; }
.menu { padding: 0 13px; }
.menu.active { width: 50px; padding: 0 1px 0 0; background: #dcdcdc; color: #1a1a1a; }
.account { margin-left: auto; padding-right: 8px; display: flex; align-items: center; }
.account a { color: #fff; text-decoration: none; }
.ic-user { margin: 0 14px 0 9px; }
.ic-reg { margin: 0 11px 0 9px; }
.ic-home { margin: 0 12px 0 10px; }
.account button { width: 10px; height: 10px; margin-left: 14px; color: #2f4d44; }
.account button:first-of-type { margin-left: 11px; }

/* ribbon */
.ribbon { height: 85px; background: #dcdcdc; border-bottom: 1px solid #c3c3c3; display: flex; }
.group { display: flex; padding: 9px 4px 0; border-right: 1px solid #c3c3c3; }
.checks { width: 175px; padding: 5px 0 0 9px; display: grid; grid-template-columns: 77px 1fr; grid-auto-rows: 28px; }
.checks label { display: flex; align-items: center; gap: 6px; white-space: nowrap; }
input[type=checkbox] { appearance: none; width: 14px; height: 14px; background: #fff; border: 1px solid #999; }
input[type=checkbox]:checked::after { content: ""; display: block; width: 4px; height: 8px; margin: 0 0 0 4px; border: solid #555; border-width: 0 1.5px 1.5px 0; transform: rotate(40deg); }
.tool { min-width: 40px; padding: 0 4px; height: 64px; display: flex; flex-direction: column; align-items: center; gap: 6px; white-space: nowrap; position: relative; }
.tool > svg { width: 32px; height: 32px; }
.blue > svg { color: #2d8fff; }
.tool > .drop { position: absolute; width: 8px; height: 8px; right: 5px; top: 13px; }
.split { font-family: "Noto Sans", sans-serif; }
.split > svg:first-child { margin-right: 12px; }
.basic { width: 53px; }
.pine { width: 62px; padding: 0; }
.pine > .drop { right: 8px; }

/* navigation tree */
.workspace { flex: 1; min-height: 0; display: flex; background: #f0f0f0; }
.sidebar { width: 258px; background: #fff; border: 1px solid #828790; }
.tree, .tree ul { list-style: none; margin: 0; padding: 0; }
.tree { padding-left: 3px; font-size: 15px; color: #000; }
.row { height: 30px; display: flex; align-items: center; line-height: 28px; }
.ti { width: 18px; height: 18px; margin: 0 5px 0 3px; }
.pale { opacity: .6; }
.gut { position: relative; width: 23px; height: 30px; display: flex; justify-content: center; padding-top: 13px; flex: none; }
.gut::before { content: ""; position: absolute; left: 11px; top: 0; bottom: 0; border-left: 1px dotted #777; }
.gut:not(.line)::after { content: ""; position: absolute; left: 12px; right: 0; top: 17px; border-top: 1px dotted #777; }
.gut.half::before { top: 17px; }
.gut.end::before { bottom: 12px; }
.tog { position: relative; z-index: 1; width: 9px; height: 9px; border: 1px solid #919191; background: linear-gradient(#1b3f9c, #1b3f9c) center / 5px 1px no-repeat, linear-gradient(#1b3f9c, #1b3f9c) center / 1px 5px no-repeat, #fff; }
.tog.open { background: linear-gradient(#1b3f9c, #1b3f9c) center / 5px 1px no-repeat, #fff; }

/* document */
.document { flex: 1; min-width: 0; padding-left: 11px; display: flex; flex-direction: column; }
.doc-tabs { height: 26px; padding-top: 1px; border-bottom: 2px solid #fff; }
.doc-tab { width: 120px; height: 23px; background: #fff; border-right: 2px solid #696969; padding: 0 8px 0 11px; display: flex; align-items: center; justify-content: space-between; font-size: 13px; font-weight: 700; color: #0078d7; }
.doc-tab button svg { width: 8px; height: 8px; }
.frame { flex: 1; min-height: 0; display: flex; flex-direction: column; border: solid #696969; border-width: 2px 0 0 2px; padding: 0 6px 6px 1px; box-shadow: inset -2px -2px #fff, inset -3px -3px #ddd; }
.tabs { display: flex; height: 21px; align-items: flex-end; color: #000; }
.tabs button { height: 18px; padding: 0 5px 3px; background: #f2f2f2; border: 1px solid #ddd; border-width: 1px 1px 0 0; white-space: nowrap; line-height: 14px; }
.tabs button.sel { height: 21px; background: #f9f9f9; padding: 0 7px 4px; }
.panes { flex: 1; min-height: 0; margin-left: 2px; display: grid; grid-template-columns: 608px 1fr; }
.form { background: #f9f9f9; border: 1px solid #696969; padding: 2px 2px 0 1px; min-height: 0; overflow: hidden; }
fieldset { margin: 0; padding: 0; min-width: 0; border: 1px solid #dcdcdc; }
legend { padding: 0 1px; margin-left: 6px; height: 12px; line-height: 12px; color: #000; white-space: pre; }
fieldset:disabled, fieldset:disabled legend { color: #a0a0a0; }
.fields { display: grid; grid-auto-rows: 21px; align-items: center; }
.fields label { white-space: nowrap; }
.c-weight label:nth-of-type(even), .c-crane label:nth-of-type(even), .c-leg label:nth-of-type(even), .c-area label:nth-of-type(even) { text-align: right; }
.unit { text-align: center; }
.spin { display: flex; height: 21px; background: #fff; border: 1px solid #a5a5ad; }
.spin > span { width: 15px; padding: 1px 0 0 1px; display: flex; flex-direction: column; }
.spin button { height: 9px; border: 1px solid #ccc; background: #f4f4f4; display: flex; align-items: center; justify-content: center; }
.spin button::before { content: ""; border: 3px solid transparent; border-bottom-color: #111; border-top: 0; }
.spin button:last-child::before { border: 3px solid transparent; border-top-color: #111; border-bottom: 0; }
.spin input { flex: 1; min-width: 0; text-align: center; padding-bottom: 3px; color: #000; }
fieldset:disabled .spin { background: #f0f0f0; }
fieldset:disabled .spin button { border-color: #ddd; opacity: .6; }
fieldset:disabled input { color: #6d6d6d; }
.flat { height: 21px; min-width: 0; text-align: center; background: #f0f0f0; border: 1px solid #e2e2e2; }

.g1 { padding: 1px 0 2px; margin-right: 1px; }
.c-weight { grid-template-columns: 111px 83px 30px 138px 82px 38px; row-gap: 6px; padding-left: 3px; }
.c-weight label:nth-of-type(even), .c-crane label:nth-of-type(even) { padding-right: 14px; }
.crane { margin: 6px 0 0 1px; padding: 9px 0; border-right: 0; }
.c-crane { grid-template-columns: 97px 82px 60px 123px 82px 38px; padding-left: 3px; }
.inner { margin: 1px 0 0 4px; }
.tab-page { margin: 0 1px 0 2px; padding: 7px 25px 9px 26px; border: 1px solid #e4e4e4; }
.leg { padding: 8px 0 7px; }
.c-leg { grid-template-columns: 86px 82px 54px 129px 82px 34px; padding-left: 14px; }
.area { margin-top: 6px; padding: 16px 0 12px; }
.c-area { grid-template-columns: 82px 82px 54px 135px 82px 28px; padding-left: 18px; }
.c-leg label:nth-of-type(even) { padding-right: 10px; }
.c-area label:nth-of-type(even) { padding-right: 16px; }

.soil { margin: 8px 1px 0 3px; padding: 6px 0 5px; }
.soil-bar { display: flex; align-items: center; height: 21px; padding: 0 35px 0 21px; gap: 6px; }
.soil-bar label { width: 63px; }
.soil-bar select { width: 85px; height: 20px; margin-right: 8px; padding-left: 4px; border: 1px solid #ccc; }
select { appearance: none; color: #000; border-radius: 0; background: #fff url("data:image/svg+xml,%3Csvg xmlns='http://www.w3.org/2000/svg' width='10' height='6'%3E%3Cpath d='M1 1l4 4 4-4' fill='none' stroke='%23555'/%3E%3C/svg%3E") no-repeat right 4px center; }
.push { flex: 1; }
.btn { height: 21px; padding: 0 7px; background: #fdfdfd; border: 1px solid #ccc; border-bottom-color: #b8b8b8; border-radius: 4px; white-space: nowrap; }
.find { width: 17px; height: 17px; background: #fdfdfd; border: 1px solid #ccc; border-radius: 3px; }
.find svg { width: 15px; height: 15px; }
.table-box { margin: 8px 1px 0 -1px; height: 137px; border: 2px solid #000; background: #f0f0f0; }
table { table-layout: fixed; width: 589px; border-collapse: collapse; background: #fff; color: #000; }
.w36 { width: 36px; } .w39 { width: 39px; } .w50 { width: 50px; } .w54 { width: 54px; } .w60 { width: 60px; } .w70 { width: 70px; } .w80 { width: 80px; }
th { height: 43px; padding: 0 0 0 5px; font-weight: 400; text-align: left; vertical-align: middle; line-height: 13px; border: 1px solid #e0e0e0; border-bottom-color: #a0a0a0; }
th.hot { background: #d9ebf9; }
td { height: 27px; padding: 0; text-align: center; border: 1px solid #a0a0a0; color: #222; }
td.mark { border-color: #e4e4e4; border-right-color: #a0a0a0; position: relative; }
.mark svg { width: 16px; height: 22px; margin-left: 21px; }
.cur::before { content: ""; position: absolute; left: 5px; top: 9px; border: 5px solid transparent; border-left: 5px solid #333; border-right: 0; }
td.picked { background: #0078d7; color: #fff; }
td select { display: block; width: 100%; height: 25px; font: 12px "Noto Sans CJK SC", sans-serif; padding: 0 0 3px 1px; border: 1px solid #bbb; background-position: right 3px top 6px; }
.note { display: flex; align-items: center; justify-content: space-between; height: 30px; margin: 3px 1px 5px 0; padding-left: 8px; }
.note span { padding-bottom: 4px; }
.accent { height: 30px; width: 78px; color: #0078d7; }
.c-fa { grid-template-columns: 209px 63px 34px 17px 126px 76px 18px 17px; padding-left: 1px; }
.c-fa label:nth-of-type(even) { padding-left: 14px; }
.c-fa .unit { padding-bottom: 4px; }
.method { margin: 7px 0 0 3px; padding: 8px 0; }
.c-method { grid-template-columns: 144px 157px 77px 77px 17px; padding-left: 55px; }
.c-method .find { margin-left: 6px; }
.c-method label { display: flex; align-items: center; gap: 5px; white-space: pre; }
.dim { color: #777; }
input[type=radio] { appearance: none; width: 13px; height: 13px; border: 1px solid #bbb; border-radius: 50%; background: #fff; }
input[type=radio]:checked { border: 4px solid #0067c0; }
.actions { display: flex; justify-content: flex-end; padding-right: 38px; }
.check { margin-top: 2px; gap: 14px; }
.check .btn { width: 73px; padding: 0; }
.result { margin: 7px 0 0 4px; padding: 0 0 5px; }
.result-body { display: flex; }
.c-result { grid-template-columns: 115px 79px 69px 114px 79px 52px; row-gap: 7px; padding: 5px 0 0 7px; }
.c-result .unit { text-align: left; padding-left: 7px; }
.c-result .unit:nth-of-type(even) { padding-left: 11px; }
.out { height: 20px; min-width: 0; text-align: center; background: #d3d3d3; border: 1px solid #eee; border-bottom: 1px solid #777; color: #000; padding-bottom: 3px; }
.out.ok { background: #90ee90; }
.big { flex: 1; height: 53px; }
.files { margin-top: 5px; gap: 27px; }
.files .btn { width: 62px; height: 23px; }

/* drawing and report */
.view { display: flex; flex-direction: column; min-width: 0; min-height: 0; }
.picture { flex: 1; min-height: 0; padding-left: 3px; background: #f9f9f9; border: solid #696969; border-width: 1px 1px 0 0; }
.cad { width: 100%; height: 100%; }
.dim-text { font: 18px "Liberation Sans", sans-serif; fill: #0f0; }
.log { height: 178px; margin-top: 11px; margin-right: 1px; padding: 0 2px; background: #90ee90; border-top: 2px solid #696969; border-left: 1px solid #696969; white-space: pre-wrap; color: #000; }
.status { height: 26px; display: flex; align-items: center; justify-content: flex-end; padding-right: 6px; }
.status .caret { margin: 0 12px 0 48px; }
.status svg { margin-right: 12px; }
.status a { color: #00f; }

/* window behind, showing at the right edge */
.behind { width: 8px; display: flex; flex-direction: column; overflow: hidden; }
.b-title { height: 30px; background: #4a6699; }
.b-tools { height: 107px; background: #e8e8e8; }
.b-corner { height: 26px; background: #d2d2d2; }
.ruler { background: #b6b6b6; padding-left: 3px; }
.ruler span { display: block; height: 27px; width: 11px; writing-mode: vertical-rl; transform: rotate(180deg); text-align: center; font-size: 11px; line-height: 11px; color: #333; }
.b-foot { height: 29px; background: #e8e8e8; border-bottom: 1px solid #9ab; }
.b-desk { flex: 1; background: #c9ecec; }
.b-black { height: 16px; background: #000; }
```
